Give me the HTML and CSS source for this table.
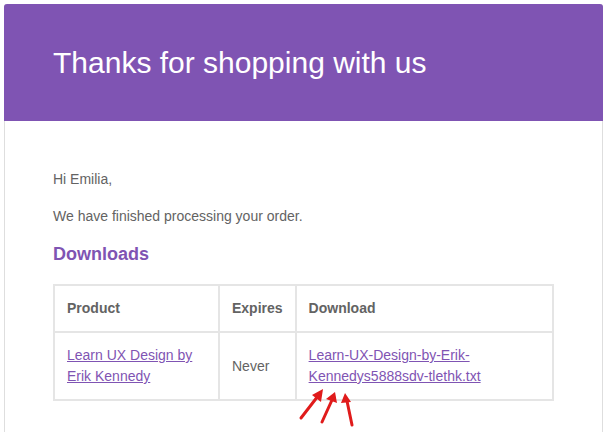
FILE: index.html
```html
<!DOCTYPE html>
<html>
<head>
<meta charset="utf-8">
<link rel="stylesheet" href="styles.css">
</head>
<body>
<div class="wrap">
  <div class="container">
    <div class="header">
      <h1>Thanks for shopping with us</h1>
    </div>
    <div class="body">
      <p>Hi Emilia,</p>
      <p>We have finished processing your order.</p>
      <h2>Downloads</h2>
      <table class="downloads">
        <thead>
          <tr>
            <th class="c-product">Product</th>
            <th class="c-expires">Expires</th>
            <th class="c-download">Download</th>
          </tr>
        </thead>
        <tbody>
          <tr>
            <td><a href="#">Learn UX Design by Erik Kennedy</a></td>
            <td>Never</td>
            <td><a href="#">Learn-UX-Design-by-Erik-Kennedys5888sdv-tlethk.txt</a></td>
          </tr>
        </tbody>
      </table>
    </div>
  </div>
  <svg class="arrows" width="609" height="432" viewBox="0 0 609 432">
    <g stroke="#e01b1b" stroke-width="3" stroke-linecap="round" fill="#e01b1b">
      <line x1="301" y1="418" x2="318" y2="396"/>
      <polygon points="323,389 312,395 321,402" stroke="none"/>
      <line x1="322" y1="422" x2="332" y2="400"/>
      <polygon points="335,392 326,399 337,403" stroke="none"/>
      <line x1="352" y1="425" x2="347" y2="401"/>
      <polygon points="345,393 341,403 351,402" stroke="none"/>
    </g>
  </svg>
</div>
</body>
</html>
```
FILE: styles.css
```css
html, body {
  margin: 0;
  padding: 0;
  background: #ffffff;
}
body {
  font-family: "Liberation Sans", Arial, sans-serif;
  color: #636363;
}
.wrap {
  position: relative;
  width: 609px;
  height: 432px;
  overflow: hidden;
  padding: 4px 0 0 4px;
  box-sizing: border-box;
}
.container {
  width: 599px;
  border: 1px solid #dedede;
  border-top: 0;
  border-radius: 3px 3px 0 0;
  box-sizing: border-box;
  background: #fff;
}
.header {
  background: #7f54b3;
  margin: 0 -1px;
  border-radius: 3px 3px 0 0;
  padding: 36px 48px 36px 49px;
}
.header h1 {
  margin: 0;
  font-size: 30px;
  font-weight: 300;
  line-height: 45px;
  color: #ffffff;
}
.body {
  padding: 48px 47px 48px 48px;
}
.body p {
  margin: 0 0 16px;
  font-size: 14px;
  line-height: 21px;
}
.body h2 {
  margin: 0 0 18px;
  font-size: 18px;
  font-weight: bold;
  line-height: 23px;
  color: #7f54b3;
}
.downloads {
  width: 501px;
  border: 1px solid #e5e5e5;
  border-collapse: separate;
  border-spacing: 0;
  font-size: 14px;
  color: #636363;
}
.downloads th,
.downloads td {
  border: 1px solid #e5e5e5;
  padding: 12px;
  text-align: left;
  vertical-align: middle;
  line-height: 21px;
}
.downloads th {
  font-weight: bold;
}
.c-product { width: 139px; }
.c-expires { width: 47px; }
.downloads a {
  color: #7f54b3;
  text-decoration: underline;
}
.arrows {
  position: absolute;
  left: 0;
  top: 0;
  pointer-events: none;
}
```
